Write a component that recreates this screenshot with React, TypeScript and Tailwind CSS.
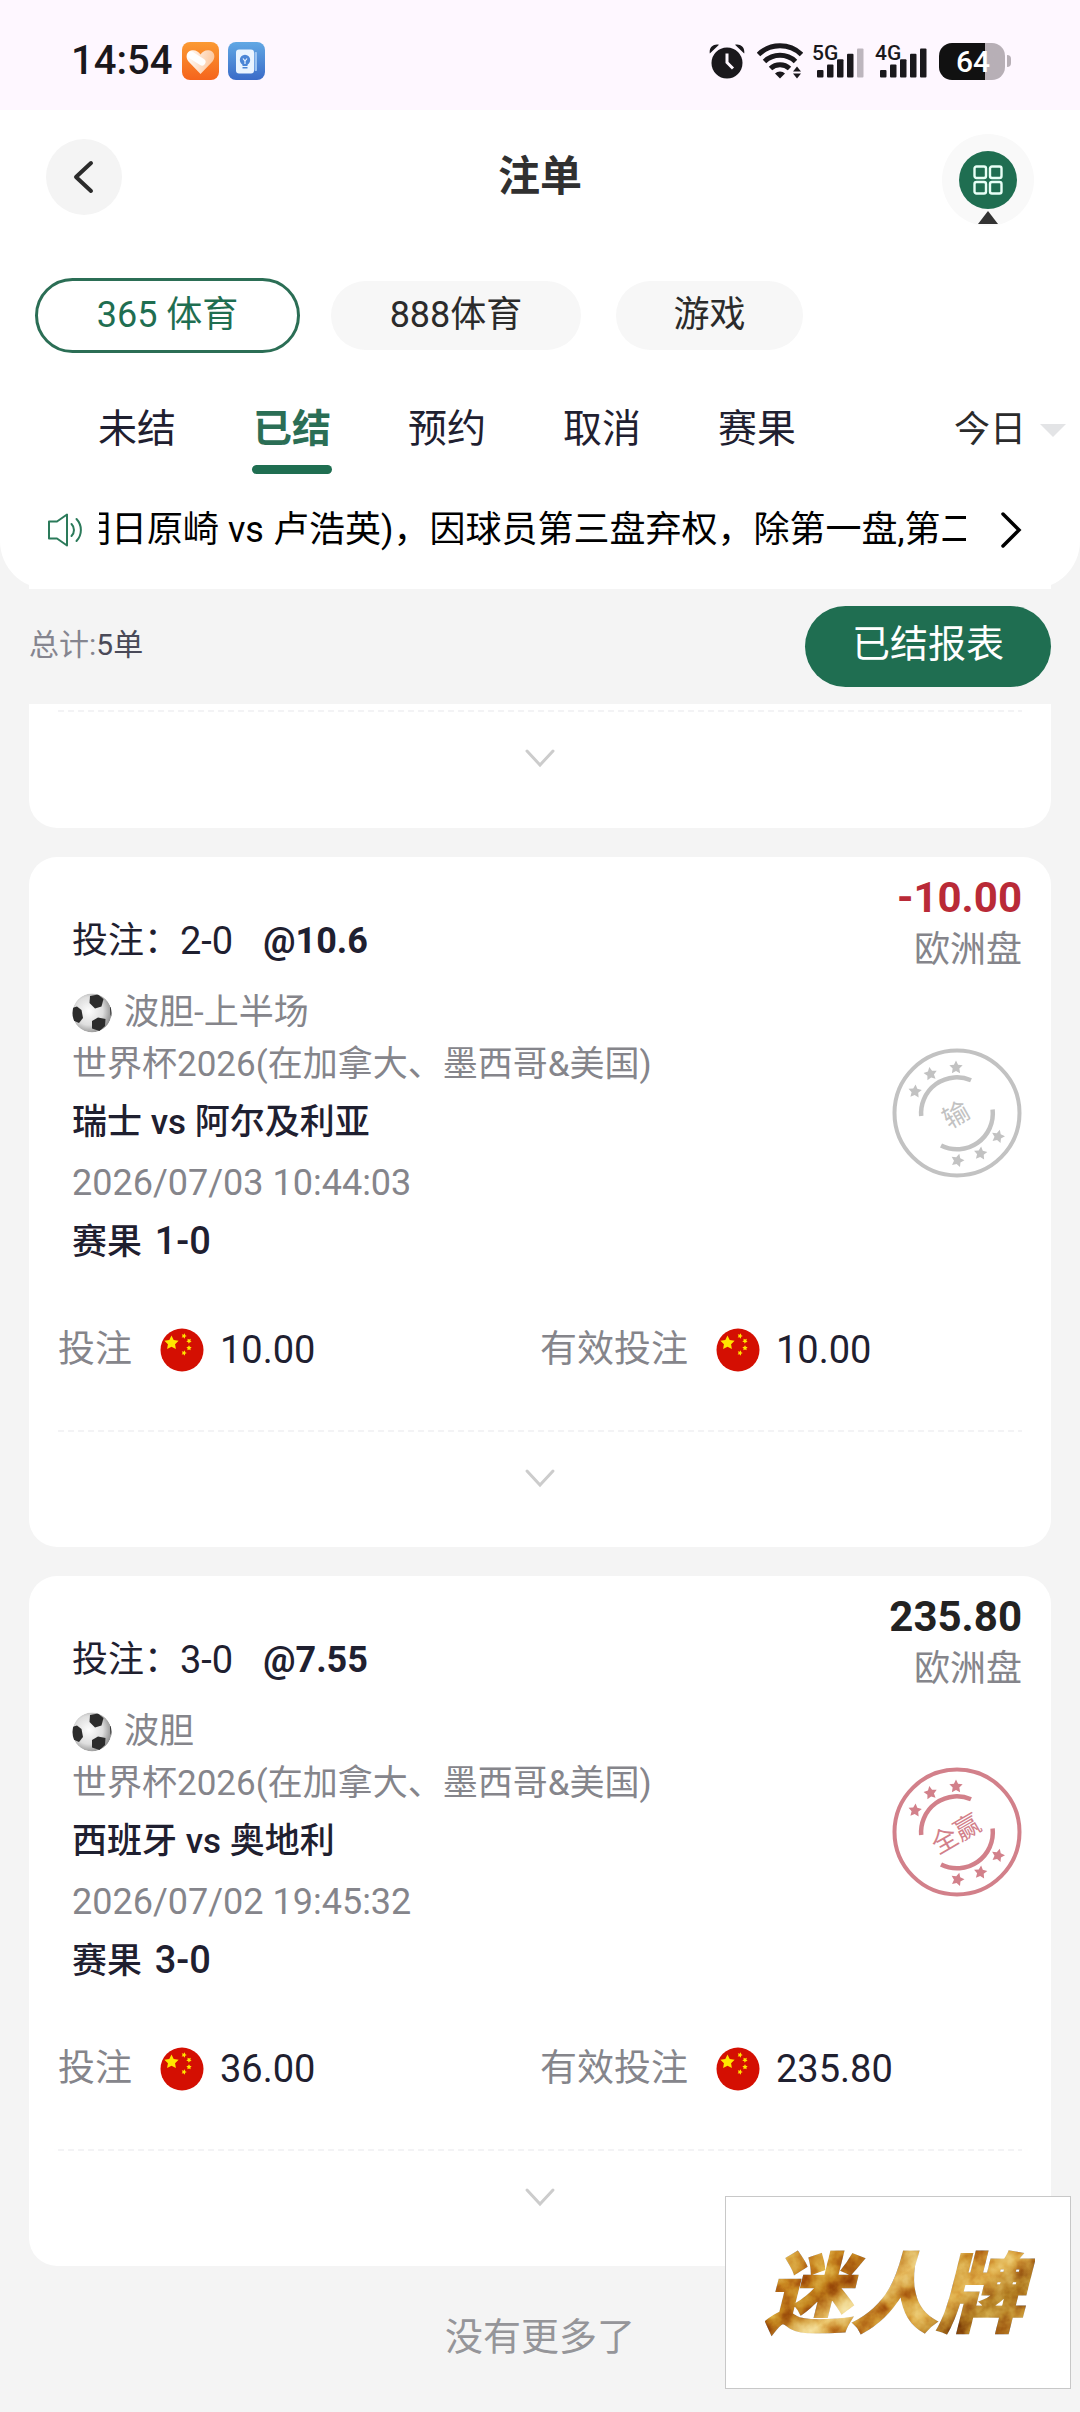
import type { ReactNode } from "react";

interface Bet {
  pick: string;
  odds: string;
  market: string;
  league: string;
  teams: string;
  time: string;
  result: string;
  amount: string;
  won: boolean;
  stamp: string;
  stake: string;
  validStake: string;
}

const bets: Bet[] = [
  {
    pick: "2-0",
    odds: "@10.6",
    market: "波胆-上半场",
    league: "世界杯2026(在加拿大、墨西哥&美国)",
    teams: "瑞士 vs 阿尔及利亚",
    time: "2026/07/03 10:44:03",
    result: "1-0",
    amount: "-10.00",
    won: false,
    stamp: "输",
    stake: "10.00",
    validStake: "10.00",
  },
  {
    pick: "3-0",
    odds: "@7.55",
    market: "波胆",
    league: "世界杯2026(在加拿大、墨西哥&美国)",
    teams: "西班牙 vs 奥地利",
    time: "2026/07/02 19:45:32",
    result: "3-0",
    amount: "235.80",
    won: true,
    stamp: "全赢",
    stake: "36.00",
    validStake: "235.80",
  },
];

const tabs = ["未结", "已结", "预约", "取消", "赛果"];

function starPoints(cx: number, cy: number, r: number, turn = 0) {
  return Array.from({ length: 10 }, (_, i) => {
    const a = ((i * 36 - 90 + turn) * Math.PI) / 180;
    const d = i % 2 ? r * 0.5 : r;
    return `${(cx + d * Math.cos(a)).toFixed(2)},${(cy + d * Math.sin(a)).toFixed(2)}`;
  }).join(" ");
}

function SignalBars({ label, level }: { label: string; level: number }) {
  return (
    <div className="relative h-[36px] w-[52px]">
      <span className="absolute left-0 top-0 text-[21px] leading-[20px] font-medium">{label}</span>
      <svg className="h-[36px] w-[52px]" viewBox="0 0 52 36" fill="#1a181c">
        {[0, 1, 2, 3, 4].map((i) => (
          <rect
            key={i}
            x={5 + i * 10}
            y={27 - i * 5.4}
            width="6.5"
            height={7.5 + i * 5.4}
            rx="1"
            fill={i < level ? "#1a181c" : "#bdb6be"}
          />
        ))}
      </svg>
    </div>
  );
}

function StatusBar() {
  return (
    <div className="flex h-[110px] items-center justify-between bg-[#fef7ff] pt-[12px] pl-[71px] pr-[69px] text-[#1a181c]">
      <div className="flex items-center">
        <span className="text-[40px] leading-[40px] font-medium">14:54</span>
        <svg className="ml-[10px] h-[38px] w-[37px]" viewBox="0 0 37 38">
          <defs>
            <linearGradient id="heartBg" x1="0" y1="0" x2="0" y2="1">
              <stop offset="0" stopColor="#fb9a33" />
              <stop offset="1" stopColor="#f5641c" />
            </linearGradient>
            <linearGradient id="heartFill" x1="0" y1="0" x2="1" y2="0.2">
              <stop offset="0" stopColor="#fff" />
              <stop offset="1" stopColor="#fdc9a0" />
            </linearGradient>
          </defs>
          <rect width="37" height="38" rx="8" fill="url(#heartBg)" />
          <path d="M18.500 32L6.500 19.500C3 15.500 4.500 9 10 8.300c3.800-.5 6.500 1.500 8.500 4.200 2-2.700 4.700-4.700 8.500-4.200 5.500.7 7 7.200 3.500 11.200Z" fill="url(#heartFill)" />
          <path d="M9 13l11 7" stroke="#fff" strokeWidth="7" strokeLinecap="round" />
        </svg>
        <svg className="ml-[9px] h-[38px] w-[37px]" viewBox="0 0 37 38">
          <defs>
            <linearGradient id="bookBg" x1="0" y1="0" x2="0" y2="1">
              <stop offset="0" stopColor="#62a8e4" />
              <stop offset="1" stopColor="#3a6bc8" />
            </linearGradient>
          </defs>
          <rect width="37" height="38" rx="8" fill="url(#bookBg)" />
          <path d="M27 10.500h1.500v18H27z" fill="#9cc4f2" stroke="#9cc4f2" strokeWidth="1" />
          <rect x="8" y="7.500" width="18" height="24" rx="3" fill="#eaf4ff" />
          <circle cx="17" cy="18" r="5.200" fill="#4c86d6" />
          <path d="M14.500 21h5v3h-5zM14.500 25h5v1.500h-5z" fill="#4c86d6" />
          <path d="M15 16.500l2 2.500 2-2.500M17 19v3" stroke="#eaf4ff" strokeWidth="1.200" fill="none" />
        </svg>
      </div>
      <div className="flex items-center">
        <svg className="h-[36px] w-[36px]" viewBox="0 0 36 36" fill="#1a181c">
          <circle cx="18" cy="20" r="15.500" />
          <path d="M.8 10.500C-.2 4.500 4.500.5 10 1.800L.8 10.500ZM35.200 10.500C36.200 4.500 31.500.5 26 1.800l9.200 8.700Z" />
          <path d="M18 10.500v9l6 6" stroke="#fef7ff" strokeWidth="3" fill="none" />
        </svg>
        <svg className="ml-[12px] h-[36px] w-[46px]" viewBox="0 0 46 36" fill="none" stroke="#1a181c" strokeWidth="5">
          <path d="M1.500 11.500a31 31 0 0 1 43 0" />
          <path d="M7.500 18.500a22.500 22.500 0 0 1 31 0" />
          <path d="M13.500 25.500a14 14 0 0 1 19 0" />
          <path d="M18 30.500a7 7 0 0 1 10 0L23 35.500Z" fill="#1a181c" stroke="none" />
          <path d="M36 28.500h8l-4-5ZM36 30.500h8l-4 5Z" fill="#1a181c" stroke="none" />
        </svg>
        <div className="ml-[9px]">
          <SignalBars label="5G" level={4} />
        </div>
        <div className="ml-[11px]">
          <SignalBars label="4G" level={5} />
        </div>
        <div className="ml-[12px] flex items-center">
          <div className="flex h-[37px] w-[66px] items-center justify-center rounded-[13px] bg-linear-to-r from-[#111] from-70% to-[#b7afb6] to-70% pl-[2px] text-[30px] leading-[37px] font-medium text-white">
            64
          </div>
          <div className="ml-[2px] h-[12px] w-[4px] rounded-r-full bg-[#b7afb6]" />
        </div>
      </div>
    </div>
  );
}

function Header() {
  return (
    <header className="flex items-start justify-between px-[46px] pt-[24px]">
      <button type="button" aria-label="返回" className="mt-[5px] flex h-[76px] w-[76px] items-center justify-center rounded-full bg-[#f4f4f4]">
        <svg className="h-[36px] w-[36px]" viewBox="0 0 36 36" fill="none" stroke="#2b2b2b" strokeWidth="4" strokeLinecap="round" strokeLinejoin="round">
          <path d="M25 4L10 18l15 14" />
        </svg>
      </button>
      <h1 className="pl-[16px] text-[42px] leading-[86px] font-bold text-[#303030]">注单</h1>
      <button type="button" aria-label="菜单" className="flex h-[92px] w-[92px] flex-col items-center rounded-full bg-[#f9f9f9] pt-[17px]">
        <span className="flex h-[58px] w-[58px] shrink-0 items-center justify-center rounded-full bg-[#1f6e51]">
          <svg className="h-[30px] w-[30px]" viewBox="0 0 30 30" fill="none" stroke="#e8fff6" strokeWidth="2.400">
            <rect x="1.500" y="1.500" width="11.500" height="11.500" rx="2" />
            <rect x="17" y="1.500" width="11.500" height="11.500" rx="2" />
            <rect x="1.500" y="17" width="11.500" height="11.500" rx="2" />
            <rect x="17" y="17" width="11.500" height="11.500" rx="2" />
          </svg>
        </span>
        <svg className="mt-[2px] h-[13px] w-[20px]" viewBox="0 0 20 13" fill="#333">
          <path d="M10 0l10 13H0Z" />
        </svg>
      </button>
    </header>
  );
}

function FilterPills() {
  return (
    <div className="flex items-center pt-[52px] pl-[35px] text-[36px] leading-[48px] text-[#2b2b2b]">
      <button type="button" className="h-[75px] w-[265px] rounded-full border-3 border-[#2b6e55] pb-[2px] text-[#1f6e51]">
        365 体育
      </button>
      <button type="button" className="ml-[31px] h-[69px] w-[250px] rounded-full bg-[#f7f7f7] pb-[2px]">
        888体育
      </button>
      <button type="button" className="ml-[35px] h-[69px] w-[187px] rounded-full bg-[#f7f7f7] pb-[2px]">
        游戏
      </button>
    </div>
  );
}

function StatusTabs() {
  return (
    <div className="flex items-start justify-between pt-[48px] pl-[97px] pr-[14px]">
      <nav className="flex gap-[75px]">
        {tabs.map((tab) => (
          <button key={tab} type="button" className="flex w-[80px] flex-col items-center text-[39px] leading-[56px] text-[#1f2030]">
            {tab === "已结" ? <b className="text-[#2b6e55]">{tab}</b> : <span>{tab}</span>}
            {tab === "已结" && <span className="mt-[8px] h-[9px] w-[80px] rounded-full bg-[#1f6e51]" />}
          </button>
        ))}
      </nav>
      <button type="button" className="flex items-center gap-[14px] text-[36px] leading-[58px] text-[#2b2b2b]">
        今日
        <svg className="h-[13px] w-[26px]" viewBox="0 0 26 13" fill="#e3e4e6">
          <path d="M0 0h26L13 13Z" />
        </svg>
      </button>
    </div>
  );
}

function Notice() {
  return (
    <div className="flex items-center pt-[30px] pb-[33px] pl-[46px] pr-[54px]">
      <svg className="h-[36px] w-[38px] shrink-0" viewBox="0 0 38 36" fill="none" stroke="#2b7a5a" strokeWidth="2" strokeLinejoin="round">
        <path d="M3 9.500h8L21 2.500v31L11 26.500H3Z" />
        <path d="M25.500 12a8.500 8.500 0 0 1 0 12M30.500 7a16 16 0 0 1 0 22" strokeLinecap="round" />
      </svg>
      <p className="ml-[15px] flex-1 overflow-hidden text-[36px] leading-[52px] whitespace-nowrap text-black">
        <span className="-ml-6">明日原崎 vs 卢浩英)，因球员第三盘弃权，除第一盘,第二</span>
      </p>
      <button type="button" aria-label="更多公告" className="ml-[30px]">
        <svg className="h-[40px] w-[30px]" viewBox="0 0 30 40" fill="none" stroke="#000" strokeWidth="3.500" strokeLinecap="round">
          <path d="M7 4l16 16L7 36" />
        </svg>
      </button>
    </div>
  );
}

function ExpandRow() {
  return (
    <div className="px-[29px]">
      <svg className="h-[2px] w-full" aria-hidden="true">
        <line x1="0" y1="1" x2="100%" y2="1" stroke="#f3f3f5" strokeWidth="2" strokeDasharray="6 4" />
      </svg>
      <button type="button" aria-label="展开" className="flex h-[92px] w-full items-center justify-center">
        <svg className="h-[20px] w-[32px]" viewBox="0 0 32 20" fill="none" stroke="#ccc" strokeWidth="3" strokeLinecap="round">
          <path d="M3 3l13 14L29 3" />
        </svg>
      </button>
    </div>
  );
}

function SoccerBall() {
  return (
    <svg className="h-[40px] w-[40px]" viewBox="0 0 40 40">
      <defs>
        <radialGradient id="ball" cx="0.42" cy="0.45" r="0.6">
          <stop offset="0" stopColor="#fdfdfd" />
          <stop offset="0.6" stopColor="#dedede" />
          <stop offset="1" stopColor="#8c8c8c" />
        </radialGradient>
        <clipPath id="ballClip">
          <circle cx="20" cy="20" r="19.500" />
        </clipPath>
      </defs>
      <g clipPath="url(#ballClip)">
        <circle cx="20" cy="20" r="19.500" fill="url(#ball)" />
        <path d="M18 3l8-1.500L31.500 6l-2 7.500L23 15.500 17.500 10Z" fill="#2c2c2c" />
        <path d="M0 15l5-1.500L9.500 17l1.500 8-4 5L0 27Z" fill="#2c2c2c" />
        <path d="M20 28l6-3.500 7.500 1.500-.5 7-5.500 5-7.500-2.500Z" fill="#2c2c2c" />
        <path d="M38 14l3 0v12l-2.500-4Z" fill="#2c2c2c" />
      </g>
    </svg>
  );
}

function Flag() {
  return (
    <svg className="h-[44px] w-[44px]" viewBox="0 0 44 44">
      <circle cx="22" cy="22" r="21.500" fill="#d40f02" />
      <g fill="#ffe600">
        <polygon points={starPoints(11.5, 15, 7.5)} />
        <polygon points={starPoints(24, 8, 2.8, 20)} />
        <polygon points={starPoints(29, 13, 2.8, 40)} />
        <polygon points={starPoints(29, 20, 2.8)} />
        <polygon points={starPoints(24, 25, 2.8, 20)} />
      </g>
    </svg>
  );
}

function Stamp({ text, won }: { text: string; won: boolean }) {
  const color = won ? "#d2808a" : "#c2c2c2";
  return (
    <svg className="h-[130px] w-[130px]" viewBox="0 0 130 130" fill="none" stroke={color}>
      <circle cx="65" cy="65" r="62.500" strokeWidth="4" />
      <path d="M29.200 68A35.800 35.800 0 0 1 79 32.200" strokeWidth="4.500" />
      <path d="M100.600 61.500A35.800 35.800 0 0 1 49 97.500" strokeWidth="4.500" />
      <g fill={color} stroke="none">
        <polygon points={starPoints(64, 19.5, 7)} />
        <polygon points={starPoints(38.5, 26, 7, -10)} />
        <polygon points={starPoints(23, 43.5, 7, 5)} />
        <polygon points={starPoints(106, 88.5, 7, 15)} />
        <polygon points={starPoints(88.5, 105.5, 7, 5)} />
        <polygon points={starPoints(65.5, 112.5, 7, 15)} />
        <text x="64" y="76" fontSize="26" textAnchor="middle" transform="rotate(-30 64 67)">
          {text}
        </text>
      </g>
    </svg>
  );
}

function Stake({ label, children }: { label: string; children: ReactNode }) {
  return (
    <div className="flex flex-1 items-center text-[37px] leading-[50px]">
      <span className="text-[#85858b]">{label}</span>
      <span className="mx-[16px] pl-[12px]">
        <Flag />
      </span>
      <span className="text-[38px] text-[#1f2030]">{children}</span>
    </div>
  );
}

function BetCard({ bet }: { bet: Bet }) {
  return (
    <article className="rounded-[28px] bg-white pb-[23px]">
      <div className="flex justify-between pl-[43px] pr-[29px]">
        <div className="pt-[58px] text-[35px] text-[#85858b]">
          <div className="flex text-[36px] leading-[52px] text-[#1f2030]">
            <span>投注：</span>
            <span className="text-[38px]">{bet.pick}</span>
            <b className="ml-[30px]">{bet.odds}</b>
          </div>
          <div className="mt-[22px] flex items-center gap-[12px] leading-[48px]">
            <SoccerBall />
            {bet.market}
          </div>
          <div className="leading-[56px]">{bet.league}</div>
          <div className="leading-[60px] font-medium text-[#1f2030]">{bet.teams}</div>
          <div className="text-[36px] leading-[60px]">{bet.time}</div>
          <div className="leading-[56px] font-medium text-[#1f2030]">
            赛果 <span className="ml-[4px] text-[38px]">{bet.result}</span>
          </div>
        </div>
        <div className="flex flex-col items-end pt-[16px]">
          <strong className={bet.won ? "text-[42px] leading-[50px] text-[#222]" : "text-[42px] leading-[50px] text-[#b92a37]"}>
            {bet.amount}
          </strong>
          <span className="mb-[71px] text-[36px] leading-[54px] text-[#85858b]">欧洲盘</span>
          <Stamp text={bet.stamp} won={bet.won} />
        </div>
      </div>
      <div className="flex px-[29px] pt-[54px] pb-[55px]">
        <Stake label="投注">{bet.stake}</Stake>
        <Stake label="有效投注">{bet.validStake}</Stake>
      </div>
      <ExpandRow />
    </article>
  );
}

function Watermark() {
  return (
    <div className="absolute right-[9px] bottom-[23px] flex h-[193px] w-[346px] items-center justify-center border border-[#c8c8c8] bg-white">
      <svg className="h-[120px] w-[300px]" viewBox="0 0 300 120">
        <defs>
          <linearGradient id="gold" x1="0" y1="0" x2="1" y2="0.6">
            <stop offset="0" stopColor="#b0761a" />
            <stop offset="0.12" stopColor="#dcae4c" />
            <stop offset="0.22" stopColor="#c58422" />
            <stop offset="0.38" stopColor="#bb7c1c" />
            <stop offset="0.5" stopColor="#ecca78" />
            <stop offset="0.6" stopColor="#c68a2a" />
            <stop offset="0.74" stopColor="#e0b152" />
            <stop offset="0.88" stopColor="#a5701c" />
            <stop offset="1" stopColor="#c49236" />
          </linearGradient>
          <filter id="foil" x="0" y="0" width="1" height="1" colorInterpolationFilters="sRGB">
            <feTurbulence type="fractalNoise" baseFrequency="0.045" numOctaves="4" seed="4" result="noise" />
            <feColorMatrix in="noise" values="1.500 0 0 0 -0.220  1.500 0 0 0 -0.260  1.300 0 0 0 -0.200  0 0 0 0 1" result="tint" />
            <feBlend in="tint" in2="SourceGraphic" mode="soft-light" result="mix" />
            <feComposite in="mix" in2="SourceGraphic" operator="in" />
          </filter>
        </defs>
        <text
          x="146"
          y="92"
          textAnchor="middle"
          fontSize="86"
          fontStyle="italic"
          fontWeight="900"
          fill="url(#gold)"
          stroke="url(#gold)"
          strokeWidth="2"
          filter="url(#foil)"
        >
          迷人牌
        </text>
      </svg>
    </div>
  );
}

export default function App() {
  return (
    <div className="relative min-h-screen bg-[#f4f4f4] font-['Roboto','Noto_Sans_CJK_SC',sans-serif]">
      <StatusBar />
      <div className="relative">
        {/* Top of the scrolled list, showing behind the rounded panel */}
        <div className="absolute inset-x-[29px] bottom-0 h-[48px] bg-white" />
        <div className="relative rounded-b-[48px] bg-white">
          <Header />
          <FilterPills />
          <StatusTabs />
          <Notice />
        </div>
      </div>

      <div className="flex items-center justify-between px-[29px] py-[17px]">
        <p className="pb-[3px] text-[30px] leading-[40px] text-[#85858f]">
          总计:<span className="text-[#4a4a58]">5单</span>
        </p>
        <button type="button" className="h-[81px] w-[246px] rounded-full bg-[#1f6e51] pb-[5px] text-[38px] leading-[56px] text-white">
          已结报表
        </button>
      </div>

      <main className="flex flex-col gap-[29px] px-[29px]">
        <div className="rounded-b-[28px] bg-white pt-[6px] pb-[24px]">
          <ExpandRow />
        </div>
        {bets.map((bet) => (
          <BetCard key={bet.time} bet={bet} />
        ))}
      </main>
      <p className="pt-[41px] pb-[40px] text-center text-[38px] leading-[60px] text-[#959599]">没有更多了</p>

      <Watermark />
    </div>
  );
}
